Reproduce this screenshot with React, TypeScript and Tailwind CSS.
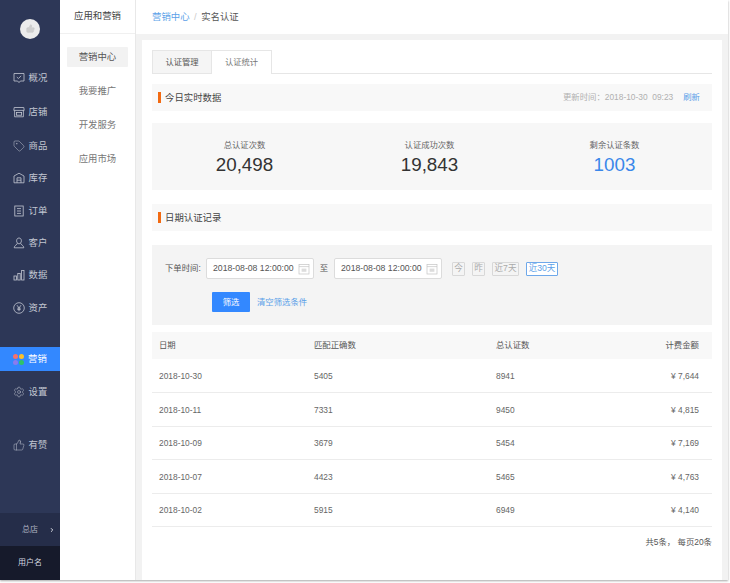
import React from 'react';
import { Tag, Settings, ThumbsUp, ChevronRight } from 'lucide-react';

function Svg({ children }: { children: React.ReactNode }) {
  return (
    <svg width="12" height="12" viewBox="0 0 12 12" fill="none" stroke="currentColor" strokeWidth="0.8" className="shrink-0">
      {children}
    </svg>
  );
}

const OverviewIcon = () => (
  <Svg>
    <path d="M1 1.5 H11 V9 H7.4 L6 10.6 L4.6 9 H1 Z" />
    <path d="M3.8 5 L5.4 6.5 L8.2 3.8" />
  </Svg>
);
const StoreIcon = () => (
  <Svg>
    <path d="M1.2 1.5 H10.8 L11.2 4.4 H0.8 Z" />
    <path d="M1.6 4.4 V10.8 H10.4 V4.4" />
    <rect x="3.4" y="6.4" width="5.2" height="2.8" />
  </Svg>
);
const WarehouseIcon = () => (
  <Svg>
    <path d="M1 4 L6 1.2 L11 4 V10.8 H1 Z" />
    <path d="M4 10.8 V5.8 H8 V10.8 M4 8.2 H8" />
  </Svg>
);
const OrderIcon = () => (
  <Svg>
    <rect x="1.8" y="1" width="8.4" height="10" />
    <path d="M4 3.6 H8 M4 6 H8 M4 8.4 H8" />
  </Svg>
);
const UserIcon = () => (
  <Svg>
    <path d="M6 1 C7.6 1 8.4 2.3 8.4 3.8 C8.4 5.4 7.4 6.8 6 6.8 C4.6 6.8 3.6 5.4 3.6 3.8 C3.6 2.3 4.4 1 6 1 Z" />
    <path d="M4.4 6.2 C4.4 7.8 1.2 8.2 1.2 10.8 H10.8 C10.8 8.2 7.6 7.8 7.6 6.2" />
  </Svg>
);
const BarsIcon = () => (
  <Svg>
    <rect x="1" y="7" width="2.4" height="4" />
    <rect x="4.8" y="4.5" width="2.4" height="6.5" />
    <rect x="8.6" y="1.5" width="2.4" height="9.5" />
  </Svg>
);
const YenIcon = () => (
  <Svg>
    <circle cx="6" cy="6" r="5.3" />
    <path d="M4 3.2 L6 6 L8 3.2 M6 6 V9.2 M4.3 6.2 H7.7 M4.3 7.6 H7.7" />
  </Svg>
);
const CalendarIcon = () => (
  <svg width="12" height="12" viewBox="0 0 12 12" fill="none" stroke="#c4c4c4" strokeWidth="0.7" className="shrink-0">
    <rect x="1" y="1.5" width="10" height="9.5" />
    <path d="M1 3.6 H11" />
    <rect x="3.6" y="5.6" width="4.8" height="3.2" fill="#dcdcdc" stroke="none" />
  </svg>
);

function Dots() {
  return (
    <span className="grid grid-cols-2 gap-[1px] w-[11px] shrink-0">
      <span className="w-[5px] h-[5px] rounded-full bg-[#f5716c]" />
      <span className="w-[5px] h-[5px] rounded-full bg-[#fbc02d]" />
      <span className="w-[5px] h-[5px] rounded-full bg-[#8a7bf0]" />
      <span className="w-[5px] h-[5px] rounded-full bg-[#2fc468]" />
    </span>
  );
}

const rows = [
  ['2018-10-30', '5405', '8941', '¥ 7,644'],
  ['2018-10-11', '7331', '9450', '¥ 4,815'],
  ['2018-10-09', '3679', '5454', '¥ 7,169'],
  ['2018-10-07', '4423', '5465', '¥ 4,763'],
  ['2018-10-02', '5915', '6949', '¥ 4,140'],
];

function NavItem({ label, icon, active, className }: { label: string; icon: React.ReactNode; active?: boolean; className?: string }) {
  return (
    <div className={`flex items-center justify-center gap-[4px] text-[9.4px] ${active ? 'h-[24px] bg-[#3388ff] text-white' : 'h-[32.4px] text-[#c3c7d2]'} ${className || ''}`}>
      {icon}
      <span>{label}</span>
    </div>
  );
}

function SectionTitle({ title, children }: { title: string; children?: React.ReactNode }) {
  return (
    <div className="h-[27px] bg-[#f8f8f8] flex items-center justify-between pl-[6px] pr-[12px]">
      <div className="flex items-center gap-[4px] text-[9.4px] text-[#444]">
        <span className="w-[3px] h-[11px] bg-[#f26a12]" />
        <span className="pt-[1px]">{title}</span>
      </div>
      {children}
    </div>
  );
}

function DateInput() {
  return (
    <div className="w-[108px] h-[21px] bg-white border border-[#dcdcdc] rounded-[2px] flex items-center justify-between pl-[6px] pr-[3px] text-[8.7px] text-[#555] whitespace-nowrap">
      <span>2018-08-08 12:00:00</span>
      <CalendarIcon />
    </div>
  );
}

function Chip({ label, active, className }: { label: string; active?: boolean; className?: string }) {
  return (
    <span className={`h-[14px] flex items-center justify-center border rounded-[1px] text-[8.6px] ${active ? 'border-[#6ea8ea] text-[#5b9fe8] bg-white' : 'border-[#d8d8d8] text-[#aaa]'} ${className || ''}`}>
      {label}
    </span>
  );
}

function Stat({ label, value, blue }: { label: string; value: string; blue?: boolean }) {
  return (
    <div className="flex flex-col items-center flex-1">
      <span className="text-[8.3px] leading-[12px] text-[#666]">{label}</span>
      <span className={`text-[18.8px] leading-[24px] mt-[2px] ${blue ? 'text-[#3a87ea]' : 'text-[#333]'}`}>{value}</span>
    </div>
  );
}

export default function App() {
  return (
    <div className='w-[730px] h-[583px] bg-white overflow-hidden [font-family:"Liberation_Sans","Noto_Sans_CJK_SC",sans-serif]'>
      <div className="w-[728px] h-[580px] flex bg-[#f2f2f2] shadow-[0_1px_2px_rgba(0,0,0,0.35)]">
        <aside className="w-[60px] bg-[#2d3757] flex flex-col shrink-0">
          <div className="h-[61.8px] flex items-center justify-center pb-[6px] pt-[2px]">
            <div className="w-5 h-5 rounded-full bg-[#ececec] flex items-center justify-center">
              <ThumbsUp size={9} className="text-[#cfcfcf]" fill="#cfcfcf" />
            </div>
          </div>
          <NavItem label="概况" icon={<OverviewIcon />} />
          <NavItem label="店铺" icon={<StoreIcon />} className="mt-[1.5px]" />
          <NavItem label="商品" icon={<Tag size={12} strokeWidth={1} className="shrink-0" />} className="mt-[1.5px]" />
          <NavItem label="库存" icon={<WarehouseIcon />} />
          <NavItem label="订单" icon={<OrderIcon />} />
          <NavItem label="客户" icon={<UserIcon />} />
          <NavItem label="数据" icon={<BarsIcon />} />
          <NavItem label="资产" icon={<YenIcon />} />
          <div className="h-[23.3px]" />
          <NavItem label="营销" icon={<Dots />} active />
          <div className="h-[4.3px]" />
          <NavItem label="设置" icon={<Settings size={12} strokeWidth={1} className="shrink-0" />} />
          <div className="h-[20.6px]" />
          <NavItem label="有赞" icon={<ThumbsUp size={12} strokeWidth={1} className="shrink-0" />} />
          <div className="flex-1" />
          <div className="h-[33px] bg-[#252d49] flex items-center justify-center text-[8px] text-[#aeb2c0] relative">
            总店
            <ChevronRight size={6} strokeWidth={4} className="absolute left-[49px] text-[#d5d8e0]" />
          </div>
          <div className="h-[34px] bg-[#161a2b] flex items-center justify-center text-[8px] text-[#d5d8e0]">用户名</div>
        </aside>

        <nav className="w-[76px] bg-white border-r border-[#e8e8e8] shrink-0">
          <div className="h-[34px] flex items-center justify-center text-[9.4px] text-[#444] border-b border-[#f0f0f0]">应用和营销</div>
          <div className="pt-[13px] px-[7px] flex flex-col text-[9.4px] text-[#777]">
            <div className="h-[20px] bg-[#f2f2f2] rounded-[1px] flex items-center justify-center text-[#555]">营销中心</div>
            <div className="h-[34px] flex items-center justify-center mt-[7px]">我要推广</div>
            <div className="h-[34px] flex items-center justify-center">开发服务</div>
            <div className="h-[34px] flex items-center justify-center">应用市场</div>
          </div>
        </nav>

        <main className="flex-1 flex flex-col min-w-0">
          <header className="h-[34px] bg-white flex items-center pl-[16px] text-[9.4px] gap-[4.5px] shrink-0">
            <span className="text-[#5b9fe8]">营销中心</span>
            <span className="text-[#ccc]">/</span>
            <span className="text-[#555]">实名认证</span>
          </header>

          <section className="mt-[6px] ml-[6px] mr-[6px] flex-1 bg-white px-[10px] pt-[10px]">
            <div className="flex h-[24px] border-b border-[#e6e6e6] text-[8.3px]">
              <div className="w-[60px] h-[24px] bg-[#f5f5f5] border border-[#e6e6e6] flex items-center justify-center text-[#555]">认证管理</div>
              <div className="w-[60px] h-[24px] bg-white border border-l-0 border-b-0 border-[#e6e6e6] flex items-center justify-center text-[#777]">认证统计</div>
            </div>

            <div className="mt-[10px]">
              <SectionTitle title="今日实时数据">
                <div className="flex gap-[10px] text-[8.4px] text-[#b0b0b0]">
                  <span>更新时间：2018-10-30&nbsp;&nbsp;09:23</span>
                  <span className="text-[#5b9fe8]">刷新</span>
                </div>
              </SectionTitle>
            </div>

            <div className="mt-[12px] h-[67px] bg-[#f7f7f7] flex items-center pr-[5px] pt-[2px]">
              <Stat label="总认证次数" value="20,498" />
              <Stat label="认证成功次数" value="19,843" />
              <Stat label="剩余认证条数" value="1003" blue />
            </div>

            <div className="mt-[14px]">
              <SectionTitle title="日期认证记录" />
            </div>

            <div className="mt-[14px] h-[80px] bg-[#f4f4f4] pt-[13px]">
              <div className="flex items-center h-[21px] text-[8.4px] text-[#555]">
                <span className="ml-[13px] w-[41px]">下单时间:</span>
                <DateInput />
                <span className="w-[20px] text-center">至</span>
                <DateInput />
                <div className="flex items-center gap-[7px] ml-[10px]">
                  <Chip label="今" className="w-[13px]" />
                  <Chip label="昨" className="w-[13px]" />
                  <Chip label="近7天" className="w-[27px]" />
                  <Chip label="近30天" active className="w-[32px]" />
                </div>
              </div>
              <div className="flex items-center mt-[13px] ml-[60px] text-[8.4px]">
                <div className="w-[38px] h-[20px] bg-[#3388ff] rounded-[1px] text-white flex items-center justify-center pt-[1px]">筛选</div>
                <span className="ml-[7px] pt-[1px] text-[#5b9fe8]">清空筛选条件</span>
              </div>
            </div>

            <table className="mt-[7px] w-full table-fixed border-collapse text-[8.4px] text-[#666]">
              <thead>
                <tr className="h-[27px] bg-[#f8f8f8] text-[#555]">
                  <th className="w-[162px] pl-[7px] text-left font-normal">日期</th>
                  <th className="w-[182px] text-left font-normal">匹配正确数</th>
                  <th className="text-left font-normal">总认证数</th>
                  <th className="pr-[13px] text-right font-normal">计费金额</th>
                </tr>
              </thead>
              <tbody>
                {rows.map((r) => (
                  <tr key={r[0]} className="h-[33.6px] border-b border-[#ececec]">
                    <td className="pl-[7px] pt-[1px]">{r[0]}</td>
                    <td className="pt-[1px]">{r[1]}</td>
                    <td className="pt-[1px]">{r[2]}</td>
                    <td className="pr-[13px] pt-[1px] text-right">{r[3]}</td>
                  </tr>
                ))}
              </tbody>
            </table>

            <div className="mt-[9px] text-right text-[8.4px] text-[#555]">共5条，&nbsp;每页20条</div>
          </section>
        </main>
      </div>
    </div>
  );
}
